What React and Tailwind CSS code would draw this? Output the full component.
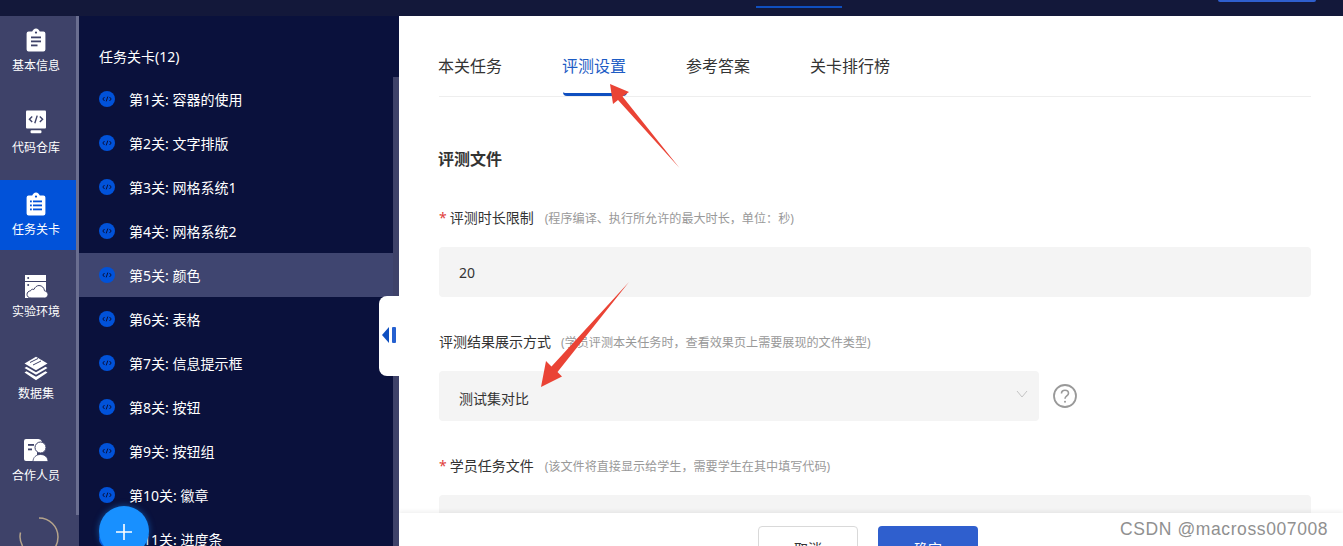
import React from "react";

function Clipboard({ lines = "#3e4269", dots = false }) {
  return (
    <svg width="24" height="24" viewBox="0 0 24 24" className="block">
      <path d="M2.600 5.500a2 2 0 0 1 2-2h3.600C8.800 1.800 10.200.4 12 .4s3.200 1.400 3.800 3.100h3.600a2 2 0 0 1 2 2V21.600a2 2 0 0 1-2 2H4.600a2 2 0 0 1-2-2z" fill="#fff" />
      <circle cx="12" cy="4.600" r="1.100" fill={lines} />
      {dots ? (
        <g fill={lines}>
          <rect x="6" y="8.500" width="1.800" height="1.800" />
          <rect x="9" y="8.500" width="9" height="1.800" />
          <rect x="6" y="12.500" width="1.800" height="1.800" />
          <rect x="9" y="12.500" width="9" height="1.800" />
          <rect x="6" y="16.500" width="1.800" height="1.800" />
          <rect x="9" y="16.500" width="9" height="1.800" />
        </g>
      ) : (
        <g fill={lines}>
          <rect x="7" y="8.500" width="10" height="1.800" />
          <rect x="7" y="12.500" width="10" height="1.800" />
          <rect x="7" y="16.500" width="6.500" height="1.800" />
        </g>
      )}
    </svg>
  );
}

function Monitor() {
  return (
    <svg width="24" height="24" viewBox="0 0 24 24" className="block">
      <rect x="2" y="0.500" width="20" height="18" rx="1" fill="#fff" />
      <rect x="6.500" y="20.200" width="11" height="3" rx="1.200" fill="#fff" />
      <path d="M8.200 6.500 5.400 9.300l2.800 2.800M15.800 6.500l2.800 2.800-2.800 2.800M13.200 5.600l-2.400 7.600" fill="none" stroke="#3e4269" strokeWidth="1.400" />
    </svg>
  );
}

function Server() {
  return (
    <svg width="24" height="24" viewBox="0 0 24 24" className="block overflow-visible">
      <rect x="1" y="1" width="21" height="6" fill="#fff" />
      <rect x="1" y="8" width="21" height="16" fill="#fff" />
      <circle cx="4.200" cy="4" r="1" fill="#3e4269" />
      <circle cx="4.200" cy="11" r="1" fill="#3e4269" />
      <path d="M7 24c-2.500 0-4-1.700-4-3.500 0-2.200 1.700-3.600 3.500-3.600.3-1 1.200-1.700 2.300-1.700.4 0 .8.100 1.100.3C11 13 13 11.500 15 11.500c3 0 5.200 2.300 5.500 5.300 2 .4 3.500 1.800 3.500 3.700 0 2-1.500 3.500-3.500 3.500z" fill="#fff" stroke="#3e4269" strokeWidth="1" />
    </svg>
  );
}

function Layers() {
  return (
    <svg width="24" height="25" viewBox="0 0 24 25" className="block">
      <path d="M12 .8 23.500 7.500 12 14.200.5 7.500z" fill="#fff" />
      <path d="M2.500 10.700 12 16.300l9.500-5.600 2 1.300L12 18.800.5 12z" fill="#fff" />
      <path d="M2.500 15.200 12 20.800l9.500-5.600 2 1.300L12 24.200.5 16.500z" fill="#fff" />
      <path d="M6 6.500 14 2.500M9 9l8-4" stroke="#3e4269" strokeWidth="1" />
    </svg>
  );
}

function People() {
  return (
    <svg width="24" height="24" viewBox="0 0 24 24" className="block">
      <path d="M0 3a2 2 0 0 1 2-2h12a4 4 0 0 1 4 2.500V9h-5v14H2a2 2 0 0 1-2-2z" fill="#fff" />
      <rect x="4" y="6" width="6" height="1.800" fill="#3e4269" />
      <rect x="4" y="10.500" width="4" height="1.800" fill="#3e4269" />
      <circle cx="16.500" cy="9.500" r="5.500" fill="#fff" stroke="#3e4269" strokeWidth="1" />
      <path d="M9 23.500c0-4 3-7 7.500-7s7.500 3 7.500 7z" fill="#fff" stroke="#3e4269" strokeWidth=".8" />
    </svg>
  );
}

const railItems = [
  { label: "基本信息", icon: <Clipboard /> },
  { label: "代码仓库", icon: <Monitor /> },
  { label: "任务关卡", icon: <Clipboard lines="#0152d9" dots />, active: true },
  { label: "实验环境", icon: <Server /> },
  { label: "数据集", icon: <Layers /> },
  { label: "合作人员", icon: <People /> },
];

const tasks = [
  "第1关: 容器的使用",
  "第2关: 文字排版",
  "第3关: 网格系统1",
  "第4关: 网格系统2",
  "第5关: 颜色",
  "第6关: 表格",
  "第7关: 信息提示框",
  "第8关: 按钮",
  "第9关: 按钮组",
  "第10关: 徽章",
  "第11关: 进度条",
];

function CodeDot() {
  return (
    <span className="flex h-4 w-4 shrink-0 items-center justify-center rounded-full bg-[#0152d9]">
      <svg width="10" height="6" viewBox="0 0 10 6">
        <path d="M2.500 1 .8 3l1.700 2M7.500 1 9.200 3 7.500 5M5.800.6 4.200 5.400" fill="none" stroke="#0a113c" strokeWidth="1" />
      </svg>
    </span>
  );
}

function Rail() {
  return (
    <aside className="flex w-[79px] shrink-0 bg-[#3e4269]">
      <div className="flex w-[76px] flex-col gap-3">
        {railItems.map((it) => (
          <div
            key={it.label}
            className={`flex h-[70px] shrink-0 flex-col items-center pr-1 pt-3 text-xs leading-5 text-white ${it.active ? "bg-[#0152d9]" : ""}`}
          >
            <div className="h-6">{it.icon}</div>
            <span className="mt-1">{it.label}</span>
          </div>
        ))}
        <div className="flex justify-center pl-0.5 pt-2">
          <svg width="42" height="42" viewBox="0 0 42 42">
            <path d="M21 2a19 19 0 0 1 19 19c0 6-3 12-8 16M2.500 16.500C2.200 18 2 19.500 2 21c0 3 1 6 2.500 9" fill="none" stroke="#b5a48c" strokeWidth="1.500" />
          </svg>
        </div>
      </div>
      <div className="h-[499px] w-[3px] bg-[#6a6e90]" />
    </aside>
  );
}

function TaskPanel() {
  return (
    <section className="flex w-[320px] shrink-0 bg-[#0a113c]">
      <div className="w-[314px] shrink-0 text-sm text-white">
        <div className="pl-5 pt-[31px] text-sm leading-5">任务关卡(12)</div>
        <ul className="mt-2.5">
          {tasks.map((t, i) => (
            <li
              key={t}
              className={`flex h-11 items-center gap-3.5 pl-5 ${i === 4 ? "bg-[#3f4570]" : ""}`}
            >
              <CodeDot />
              <span className="translate-y-px">{t}</span>
            </li>
          ))}
        </ul>
      </div>
      <div className="mt-[61px] w-1.5 flex-1 bg-[#3e4269]" />
    </section>
  );
}

function Label({ star, title, hint }) {
  return (
    <div className="flex h-5 items-center text-sm leading-5 text-[#333]">
      {star && <span className="mr-[3px] text-[#e0403a]">*</span>}
      <span>{title}</span>
      <span className={`translate-y-px text-[12.100px] text-[#999] ${star ? "ml-[11px]" : "ml-2.5"}`}>{hint}</span>
    </div>
  );
}

function MainPanel() {
  const tabs = ["本关任务", "评测设置", "参考答案", "关卡排行榜"];
  return (
    <main className="relative flex-1 overflow-hidden bg-white pl-10 pr-8">
      <div className="flex gap-[60px] border-b border-[#eeeeee] pt-[37px]">
        {tabs.map((t, i) => (
          <div
            key={t}
            className={`border-b-[3px] pb-4 text-base leading-6 ${i === 1 ? "rounded-b-sm border-[#0f4fc0] text-[#1d5cc4]" : "border-transparent text-[#333]"}`}
          >
            <span className="block -translate-x-px translate-y-px">{t}</span>
          </div>
        ))}
      </div>

      <h2 className="-ml-px mt-[50px] text-base font-bold leading-6 text-[#333]">评测文件</h2>

      <div className="mt-[37px]">
        <Label star title="评测时长限制" hint="(程序编译、执行所允许的最大时长，单位：秒)" />
      </div>
      <div className="mt-[19px] flex h-[50px] items-center rounded bg-[#f4f4f4] pl-5 pt-0.5 text-sm text-[#333]">20</div>

      <div className="mt-[35px]">
        <Label title="评测结果展示方式" hint="(学员评测本关任务时，查看效果页上需要展现的文件类型)" />
      </div>
      <div className="mt-[19px] flex items-center gap-3.5">
        <div className="flex h-[50px] w-[600px] items-center justify-between rounded bg-[#f4f4f4] pl-5 pr-[11px] text-sm text-[#333]">
          <span className="translate-y-[3px]">测试集对比</span>
          <svg width="12" height="8" viewBox="0 0 12 8" className="-translate-y-0.5">
            <path d="M1 1l5 6 5-6" fill="none" stroke="#c4c4c4" strokeWidth="1" />
          </svg>
        </div>
        <svg width="24" height="24" viewBox="0 0 24 24">
          <circle cx="12" cy="12" r="11" fill="none" stroke="#999" strokeWidth="1.800" />
          <path d="M8.500 9.500c0-2 1.500-3.300 3.500-3.300s3.500 1.300 3.500 3.100c0 2.600-3.500 2.700-3.500 5.400" fill="none" stroke="#999" strokeWidth="1.600" />
          <circle cx="12" cy="17.800" r="1" fill="#999" />
        </svg>
      </div>

      <div className="mt-[35px]">
        <Label star title="学员任务文件" hint="(该文件将直接显示给学生，需要学生在其中填写代码)" />
      </div>
      <div className="mt-[19px] h-[50px] rounded bg-[#f4f4f4]" />

      <footer className="absolute inset-x-0 top-[497px] flex h-[60px] justify-center gap-5 bg-white pr-1.5 pt-[13px] shadow-[0_-2px_4px_rgba(0,0,0,0.06)]">
        <button className="h-10 w-[100px] rounded border border-[#d9d9d9] bg-white pt-1.5 text-sm text-[#333]">取消</button>
        <button className="h-10 w-[100px] rounded bg-[#2f5fce] pt-1.5 text-sm text-white">确定</button>
      </footer>
    </main>
  );
}

export default function App() {
  return (
    <div className="relative flex h-[546px] w-[1343px] flex-col overflow-hidden bg-white font-['Noto_Sans','Noto_Sans_CJK_SC',sans-serif]">
      <header className="flex h-4 shrink-0 bg-[#13183a]">
        <div className="ml-[756px] mt-1.5 h-0.5 w-[86px] bg-[#0f4fc0]" />
        <div className="ml-[376px] h-0.5 w-[98px] rounded-b bg-[#2f5fce]" />
      </header>
      <div className="flex min-h-0 flex-1">
        <Rail />
        <TaskPanel />
        <MainPanel />
      </div>

      {/* floating add button */}
      <div className="absolute left-[99px] top-[506px] flex h-[50px] w-[50px] items-center justify-center rounded-full bg-[#1890ff] shadow-[0_0_6px_rgba(24,144,255,0.5)]">
        <svg width="18" height="18" viewBox="0 0 18 18" className="translate-y-px">
          <path d="M9 1v16M1 9h16" stroke="#fff" strokeWidth="1.600" />
        </svg>
      </div>

      {/* collapse handle */}
      <div className="absolute left-[379px] top-[296px] flex h-[80px] w-5 items-center rounded-l-lg bg-white pl-[3px]">
        <svg width="14" height="16" viewBox="0 0 14 16" className="-translate-y-px">
          <path d="M7 0v16L0 8z" fill="#0f4fc0" />
          <rect x="10" y="0" width="4" height="16" rx="1" fill="#2560d0" />
        </svg>
      </div>

      {/* annotation arrows */}
      <svg width="1343" height="546" viewBox="0 0 1343 546" className="pointer-events-none absolute left-0 top-0">
        <path d="M610 84 629 92 622.500 96.500 679.500 168 618 100 613 104z" fill="#ea4335" />
        <path d="M541 387 546 361 551.500 366.500 629 282 557.500 372 562 376.500z" fill="#ea4335" />
      </svg>

      {/* watermark */}
      <div className="absolute left-[1120px] top-[518px] font-['Liberation_Sans',sans-serif] text-[17.500px] leading-[22px] tracking-[0.6px] text-[#909090]">
        CSDN @macross007008
      </div>
    </div>
  );
}
